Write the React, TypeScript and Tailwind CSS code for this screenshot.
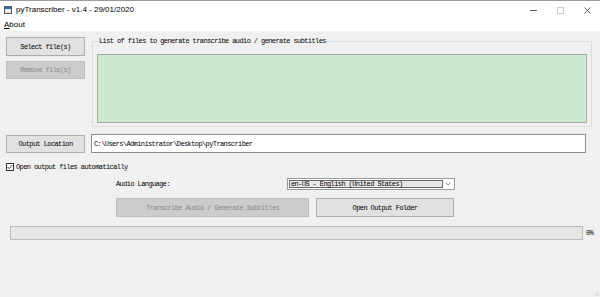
import { ChevronDown } from 'lucide-react';

const mono = "font-['Liberation_Mono',monospace] text-[7px] tracking-[-0.6px] leading-[8px]";

function Button({ label, disabled = false, className = '' }: { label: string; disabled?: boolean; className?: string }) {
  return (
    <div
      className={`flex items-center justify-center border ${
        disabled ? 'bg-[#cccccc] border-[#bfbfbf] text-[#8a8a8a]' : 'bg-[#e1e1e1] border-[#adadad] text-black'
      } ${mono} ${className}`}
    >
      {label}
    </div>
  );
}

export default function App() {
  return (
    <div className="w-[600px] h-[297px] bg-[#f0f0f0] flex flex-col overflow-hidden">
      {/* Title bar */}
      <div className="h-[19px] bg-white flex items-center border-t border-[#9a9a9a] font-['Liberation_Sans',sans-serif] text-[8px] text-black">
        <svg width="8" height="8" viewBox="0 0 8 8" className="ml-[4px]">
          <rect x="0.5" y="0.5" width="7" height="7" fill="#e8e8e8" stroke="#555" />
          <rect x="1" y="1" width="6" height="2" fill="#3b6ea8" />
        </svg>
        <span className="ml-[4px]">pyTranscriber - v1.4 - 29/01/2020</span>
        <div className="ml-auto flex items-center">
          <svg width="7" height="7" viewBox="0 0 7 7" className="mr-[20px]">
            <line x1="0" y1="3.5" x2="7" y2="3.5" stroke="#333" strokeWidth="0.8" />
          </svg>
          <svg width="7" height="7" viewBox="0 0 7 7" className="mr-[20px]">
            <rect x="0.5" y="0.5" width="6" height="6" fill="none" stroke="#bdbdbd" strokeWidth="0.8" />
          </svg>
          <svg width="7" height="7" viewBox="0 0 7 7" className="mr-[9px]">
            <path d="M0.5 0.5 L6.5 6.5 M6.5 0.5 L0.5 6.5" stroke="#333" strokeWidth="0.8" />
          </svg>
        </div>
      </div>

      {/* Menu bar */}
      <div className="h-[12px] bg-white flex items-center font-['Liberation_Sans',sans-serif] text-[8px] text-black">
        <span className="ml-[4px]">
          <span className="underline">A</span>bout
        </span>
      </div>

      {/* Files row */}
      <div className="flex items-start pt-[6px]">
        <div className="ml-[6px] w-[79px] flex flex-col gap-[5px]">
          <Button label="Select file(s)" className="h-[19px]" />
          <Button label="Remove file(s)" disabled className="h-[18px]" />
        </div>
        <fieldset className="ml-[7px] w-[500px] border border-[#dcdcdc] px-[4px] pt-[9px] pb-[3px]">
          <legend className={`ml-[1px] px-[1px] text-black ${mono}`}>
            List of files to generate transcribe audio / generate subtitles
          </legend>
          <div className="h-[69px] bg-[#cce8cf] border border-[#a8a8a8]" />
        </fieldset>
      </div>

      {/* Output location */}
      <div className="flex items-center mt-[7px]">
        <Button label="Output Location" className="ml-[6px] w-[79px] h-[18px]" />
        <div className={`ml-[6px] w-[495px] h-[19px] bg-white border border-[#8f8f8f] flex items-center pl-[2px] text-black ${mono}`}>
          C:\Users\Administrator\Desktop\pyTranscriber
        </div>
      </div>

      {/* Checkbox */}
      <div className="flex items-center mt-[9px] ml-[6px] h-[9px]">
        <svg width="8" height="8" viewBox="0 0 8 8">
          <rect x="0.5" y="0.5" width="7" height="7" fill="white" stroke="#333" />
          <path d="M1.6 4 L3.2 5.6 L6.4 2.2" fill="none" stroke="#222" strokeWidth="0.9" />
        </svg>
        <span className={`ml-[2px] text-black ${mono}`}>Open output files automatically</span>
      </div>

      {/* Audio language */}
      <div className="flex items-center mt-[7px] h-[12px]">
        <span className={`ml-[116px] w-[171px] text-black ${mono}`}>Audio Language:</span>
        <div className="w-[168px] h-[12px] bg-white border border-[#9a9a9a] flex items-center p-[1px]">
          <div className={`flex-1 h-full border border-[#6a6a6a] bg-[#e8e8e8] flex items-center pl-[1px] text-black ${mono}`}>
            en-US - English (United States)
          </div>
          <ChevronDown className="w-[8px] h-[8px] mx-[1px] text-[#555]" strokeWidth={2} />
        </div>
      </div>

      {/* Action buttons */}
      <div className="flex items-center mt-[8px]">
        <Button label="Transcribe Audio / Generate Subtitles" disabled className="ml-[116px] w-[193px] h-[19px]" />
        <Button label="Open Output Folder" className="ml-[7px] w-[138px] h-[19px]" />
      </div>

      {/* Progress */}
      <div className="flex items-center mt-[9px]">
        <div className="ml-[10px] w-[573px] h-[14px] bg-[#e6e6e6] border border-[#bcbcbc]" />
        <span className={`ml-[3px] text-black ${mono}`}>0%</span>
      </div>

      <div className="flex-1" />
      <div className="flex justify-end pr-[1px] pb-[1px]">
        <svg width="5" height="5" viewBox="0 0 5 5">
          <path d="M4.5 1 L1 4.5 M4.5 3 L3 4.5" stroke="#b0b0b0" strokeWidth="0.6" />
        </svg>
      </div>
    </div>
  );
}
